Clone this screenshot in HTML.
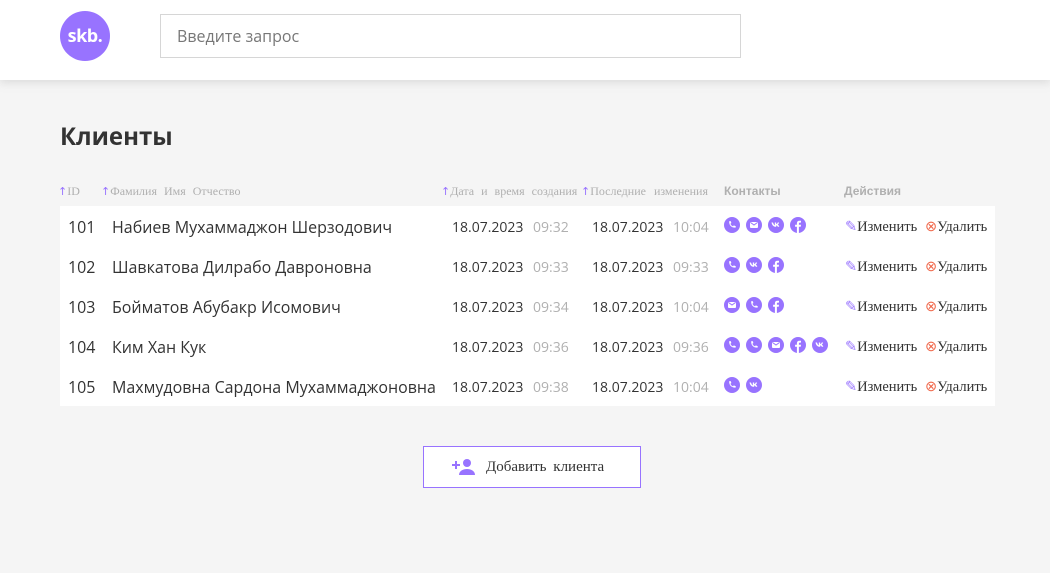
<!DOCTYPE html>
<html><head><meta charset="utf-8"><style>
*{margin:0;padding:0;box-sizing:border-box}
body{width:1050px;height:573px;background:#F5F5F5;font-family:"Open Sans","Liberation Sans",sans-serif;position:relative;overflow:hidden}
header{position:absolute;left:0;top:0;width:1050px;height:80px;background:#fff;box-shadow:0 3px 8px rgba(176,176,176,.35)}
.logo{position:absolute;left:60px;top:11px;width:50px;height:50px;border-radius:50%;background:#9873FF;color:#fff;font-weight:bold;font-size:18px;line-height:50px;text-align:center;letter-spacing:-0.5px}
.search{position:absolute;left:160px;top:14px;width:581px;height:44px;border:1px solid rgba(51,51,51,.2);font-size:16px;color:#777;padding:10px 16px}
h1{position:absolute;left:60px;top:120px;font-size:24px;font-weight:bold;color:#333}
.th{position:absolute;top:184px;font-family:"Liberation Serif",serif;font-size:12px;color:#B0B0B0;word-spacing:4px}
.th b{color:#9873FF;font-weight:normal;font-family:"DejaVu Sans",sans-serif;font-size:11px}
.th.s{font-family:"Liberation Sans",sans-serif;font-weight:bold;font-size:12px;word-spacing:0;top:184px}
.tbl{position:absolute;left:60px;top:206px;width:935px;height:200px;background:#fff}
.row{position:absolute;left:0;width:935px;height:40px;font-size:16px;color:#333}
.row span{position:absolute;top:10px}
.d{font-size:14px!important;top:12px!important}
.t{font-size:14px!important;top:12px!important;color:#B0B0B0}
.row svg.ic{position:absolute;top:11px;width:16px;height:16px}
.act{font-family:"Liberation Serif",serif;font-size:14.5px!important;top:13px!important;color:#333}
.btn{position:absolute;left:423px;top:446px;width:218px;height:42px;border:1px solid #9873FF;background:#fff;font-family:"Liberation Serif",serif;font-size:15px;color:#333;padding:12px 0 0 62px;word-spacing:3px}
</style></head><body>
<svg width="0" height="0" style="position:absolute"><defs>
<symbol id="ph" viewBox="0 0 16 16"><circle cx="8" cy="8" r="8" fill="#9873FF"/><path d="M5.2 4.2l1.4-.2.8 2-1 .8c.5 1.2 1.4 2.1 2.6 2.6l.8-1 2 .8-.2 1.4c-4 .3-6.7-2.4-6.4-6.4z" fill="#fff"/></symbol>
<symbol id="ml" viewBox="0 0 16 16"><circle cx="8" cy="8" r="8" fill="#9873FF"/><rect x="4" y="5" width="8" height="6" rx="1" fill="#fff"/><path d="M4.5 5.5L8 8l3.5-2.5" stroke="#9873FF" fill="none"/></symbol>
<symbol id="vk" viewBox="0 0 16 16"><circle cx="8" cy="8" r="8" fill="#9873FF"/><path d="M3.5 5.5h1.5c.5 1.8 1.3 2.7 1.8 2.8V5.5h1.4v1.6c.6 0 1.3-.8 1.5-1.6h1.4c-.2 1-.9 1.8-1.4 2.1.6.3 1.3 1 1.600 2.200H9.8c-.3-.8-.9-1.300-1.600-1.400v1.400h-.3C5.4 9.8 4 8 3.5 5.5z" fill="#fff"/></symbol>
<symbol id="fb" viewBox="0 0 16 16"><circle cx="8" cy="8" r="8" fill="#9873FF"/><path d="M8.9 16V9.8h1.8l.3-2H8.9V6.6c0-.6.3-1 1-1h1.1V3.8c-.4 0-1-.1-1.6-.1-1.6 0-2.5.9-2.5 2.6v1.5H5.1v2h1.8V16z" fill="#fff"/></symbol>
</defs></svg>
<header><div class="logo">skb.</div><div class="search">Введите запрос</div></header>
<h1>Клиенты</h1>
<div class="th" style="left:58px"><b>↑</b>ID</div>
<div class="th" style="left:101px"><b>↑</b>Фамилия Имя Отчество</div>
<div class="th" style="left:441px;word-spacing:4px"><b>↑</b>Дата и время создания</div>
<div class="th" style="left:581px;word-spacing:5px"><b>↑</b>Последние изменения</div>
<div class="th s" style="left:724px">Контакты</div>
<div class="th s" style="left:844px">Действия</div>
<div class="tbl">
<div class="row" style="top:0"><span style="left:8px">101</span><span style="left:52px">Набиев Мухаммаджон Шерзодович</span><span class="d" style="left:392px">18.07.2023</span><span class="t" style="left:473px">09:32</span><span class="d" style="left:532px">18.07.2023</span><span class="t" style="left:613px">10:04</span>
<svg class="ic" style="left:664px"><use href="#ph"/></svg><svg class="ic" style="left:686px"><use href="#ml"/></svg><svg class="ic" style="left:708px"><use href="#vk"/></svg><svg class="ic" style="left:730px"><use href="#fb"/></svg>
<span class="act" style="left:785px"><b style="color:#9873FF;font-weight:normal">✎</b>Изменить</span><span class="act" style="left:865px"><b style="color:#F06A4D;font-weight:normal">⊗</b>Удалить</span></div>
<div class="row" style="top:40px"><span style="left:8px">102</span><span style="left:52px">Шавкатова Дилрабо Давроновна</span><span class="d" style="left:392px">18.07.2023</span><span class="t" style="left:473px">09:33</span><span class="d" style="left:532px">18.07.2023</span><span class="t" style="left:613px">09:33</span>
<svg class="ic" style="left:664px"><use href="#ph"/></svg><svg class="ic" style="left:686px"><use href="#vk"/></svg><svg class="ic" style="left:708px"><use href="#fb"/></svg>
<span class="act" style="left:785px"><b style="color:#9873FF;font-weight:normal">✎</b>Изменить</span><span class="act" style="left:865px"><b style="color:#F06A4D;font-weight:normal">⊗</b>Удалить</span></div>
<div class="row" style="top:80px"><span style="left:8px">103</span><span style="left:52px">Бойматов Абубакр Исомович</span><span class="d" style="left:392px">18.07.2023</span><span class="t" style="left:473px">09:34</span><span class="d" style="left:532px">18.07.2023</span><span class="t" style="left:613px">10:04</span>
<svg class="ic" style="left:664px"><use href="#ml"/></svg><svg class="ic" style="left:686px"><use href="#ph"/></svg><svg class="ic" style="left:708px"><use href="#fb"/></svg>
<span class="act" style="left:785px"><b style="color:#9873FF;font-weight:normal">✎</b>Изменить</span><span class="act" style="left:865px"><b style="color:#F06A4D;font-weight:normal">⊗</b>Удалить</span></div>
<div class="row" style="top:120px"><span style="left:8px">104</span><span style="left:52px">Ким Хан Кук</span><span class="d" style="left:392px">18.07.2023</span><span class="t" style="left:473px">09:36</span><span class="d" style="left:532px">18.07.2023</span><span class="t" style="left:613px">09:36</span>
<svg class="ic" style="left:664px"><use href="#ph"/></svg><svg class="ic" style="left:686px"><use href="#ph"/></svg><svg class="ic" style="left:708px"><use href="#ml"/></svg><svg class="ic" style="left:730px"><use href="#fb"/></svg><svg class="ic" style="left:752px"><use href="#vk"/></svg>
<span class="act" style="left:785px"><b style="color:#9873FF;font-weight:normal">✎</b>Изменить</span><span class="act" style="left:865px"><b style="color:#F06A4D;font-weight:normal">⊗</b>Удалить</span></div>
<div class="row" style="top:160px"><span style="left:8px">105</span><span style="left:52px">Махмудовна Сардона Мухаммаджоновна</span><span class="d" style="left:392px">18.07.2023</span><span class="t" style="left:473px">09:38</span><span class="d" style="left:532px">18.07.2023</span><span class="t" style="left:613px">10:04</span>
<svg class="ic" style="left:664px"><use href="#ph"/></svg><svg class="ic" style="left:686px"><use href="#vk"/></svg>
<span class="act" style="left:785px"><b style="color:#9873FF;font-weight:normal">✎</b>Изменить</span><span class="act" style="left:865px"><b style="color:#F06A4D;font-weight:normal">⊗</b>Удалить</span></div>
</div>
<div class="btn"><svg style="position:absolute;left:28px;top:11px" width="24" height="18" viewBox="0 0 24 18"><circle cx="15" cy="5" r="4" fill="#9873FF"/><path d="M7 17c0-4 4-6 8-6s8 2 8 6z" fill="#9873FF"/><path d="M4 3v8M0 7h8" stroke="#9873FF" stroke-width="2"/></svg>Добавить клиента</div>
</body></html>
